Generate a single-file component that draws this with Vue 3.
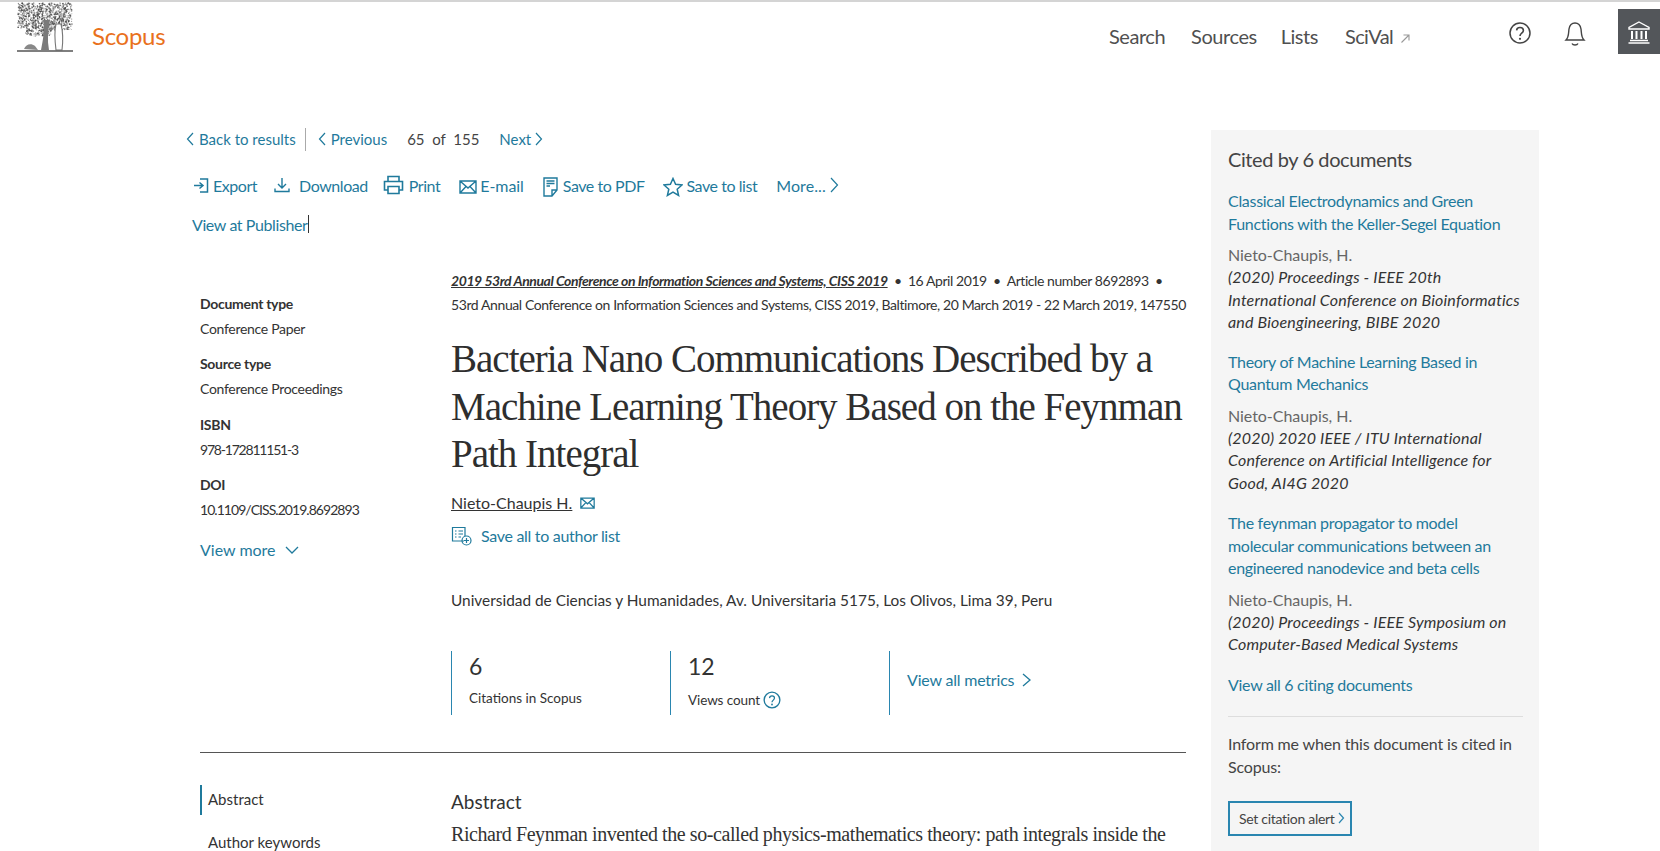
<script setup>
const seeds = []
let s = 7
const rnd = () => { s = (s * 16807) % 2147483647; return s / 2147483647 }
for (let i = 0; i < 1100; i++) {
  const x = 1 + rnd() * 54, y = 1 + rnd() * 33
  const dx = (x - 28) / 28, dy = (y - 13) / 22
  if (dx * dx * 0.55 + dy * dy < 1 && !(x > 34 && y > 28) && !(x < 8 && y > 26)) seeds.push({ x, y, r: 0.35 + rnd() * 0.55, o: 0.35 + rnd() * 0.6 })
}
const meta = [
  ['Document type', 'Conference Paper'],
  ['Source type', 'Conference Proceedings'],
  ['ISBN', '978-172811151-3'],
  ['DOI', '10.1109/CISS.2019.8692893']
]
const cited = [
  { t: ['Classical Electrodynamics and Green', 'Functions with the Keller-Segel Equation'], a: 'Nieto-Chaupis, H.', s: ['(2020) Proceedings - IEEE 20th', 'International Conference on Bioinformatics', 'and Bioengineering, BIBE 2020'] },
  { t: ['Theory of Machine Learning Based in', 'Quantum Mechanics'], a: 'Nieto-Chaupis, H.', s: ['(2020) 2020 IEEE / ITU International', 'Conference on Artificial Intelligence for', 'Good, AI4G 2020'] },
  { t: ['The feynman propagator to model', 'molecular communications between an', 'engineered nanodevice and beta cells'], a: 'Nieto-Chaupis, H.', s: ['(2020) Proceedings - IEEE Symposium on', 'Computer-Based Medical Systems'] }
]
</script>

<template>
  <div class="page">
    <header class="top">
      <svg class="tree" width="56" height="50" viewBox="0 0 56 50">
        <circle v-for="(c, i) in seeds" :key="i" :cx="c.x" :cy="c.y" :r="c.r" fill="#444" :opacity="c.o" />
        <path d="M26 18 C28 28 26 38 24 48 L32 48 C30 38 31 28 33 18 Z" fill="#7a7a7a" />
        <path d="M39 22 C37 30 38 40 39 48 L45 48 C46 40 46 30 44 22 Z" fill="#fff" stroke="#777" stroke-width="1.100" />
        <path d="M7 47 C9 42 14 41 18 44 L21 48 Z" fill="#888" />
        <path d="M0 49 H56" fill="none" stroke="#555" stroke-width="1.500" />
      </svg>
      <span class="brand">Scopus</span>
      <nav class="nav">
        <a class="n1">Search</a><a class="n2">Sources</a><a class="n3">Lists</a><a class="n4">SciVal</a>
        <svg class="ext" width="11" height="11" viewBox="0 0 11 11"><path d="M1.500 9.500 9 2 M3.500 2 H9 V7.500" fill="none" stroke="#999" stroke-width="1.100" /></svg>
      </nav>
      <svg class="help" width="24" height="24" viewBox="0 0 24 24"><circle cx="12" cy="12" r="10" fill="none" stroke="#444" stroke-width="1.500" /><path d="M8.600 9.400 C8.800 5.400 15.400 5.600 15.400 9.600 C15.400 12.200 12 12.300 12 15" fill="none" stroke="#444" stroke-width="1.600" /><circle cx="12" cy="17.800" r="1.100" fill="#444" /></svg>
      <svg class="bell" width="22" height="26" viewBox="0 0 22 26"><path d="M2 19 C5 16 4.500 11 5 8 C5.700 4 8.500 2 11 2 C13.500 2 16.300 4 17 8 C17.500 11 17 16 20 19 Z" fill="none" stroke="#444" stroke-width="1.400" /><path d="M8 22.500 C9 24.500 13 24.500 14 22.500" fill="none" stroke="#444" stroke-width="1.400" /></svg>
      <div class="inst">
        <svg width="24" height="24" viewBox="0 0 24 24"><path d="M12 2 L22 7.500 V9 H2 V7.500 Z" fill="none" stroke="#fff" stroke-width="1.400" /><path d="M5 11 V19 M9.500 11 V19 M14.500 11 V19 M19 11 V19" stroke="#fff" stroke-width="2" /><path d="M3 20.500 H21 M1.500 23 H22.500" stroke="#fff" stroke-width="1.500" /></svg>
      </div>
    </header>

    <div class="body">
      <main class="main">
        <div class="pager">
          <a class="link"><svg class="cv l" width="8" height="14" viewBox="0 0 8 14"><path d="M7 1 L1.500 7 L7 13" /></svg>Back to results</a>
          <span class="divider"></span>
          <a class="link"><svg class="cv l" width="8" height="14" viewBox="0 0 8 14"><path d="M7 1 L1.500 7 L7 13" /></svg>Previous</a>
          <span class="count">65 &nbsp;of &nbsp;155</span>
          <a class="link">Next<svg class="cv r" width="8" height="14" viewBox="0 0 8 14"><path d="M1 1 L6.500 7 L1 13" /></svg></a>
        </div>
        <div class="tools">
          <a class="tool t-export">
            <svg width="15" height="17" viewBox="0 0 15 17"><path d="M0 8.500 H8.500 M5.500 5.500 L9 8.500 L5.500 11.500 M6 2 H13.500 V15 H6" fill="none" stroke="#1f7a9c" stroke-width="1.500" /></svg>
            Export
          </a>
          <a class="tool t-down">
            <svg width="16" height="16" viewBox="0 0 16 16"><path d="M8 1 V10.500 M4 7 L8 11 L12 7 M1 11.500 V14.500 H15 V11.500" fill="none" stroke="#1f7a9c" stroke-width="1.400" /></svg>
            Download
          </a>
          <a class="tool t-print">
            <svg width="21" height="20" viewBox="0 0 21 20"><path d="M5 6 V1.500 H16 V6 M5 15 H1.500 V6.500 H19.500 V15 H16 M5 11.500 H16 V18.500 H5 Z" fill="none" stroke="#1f7a9c" stroke-width="1.600" /></svg>
            Print
          </a>
          <a class="tool t-mail">
            <svg class="drop" width="18" height="14" viewBox="0 0 18 14"><path d="M1 1 H17 V13 H1 Z M1 1 L9 8 L17 1 M1 13 L7 6.500 M17 13 L11 6.500" fill="none" stroke="#1f7a9c" stroke-width="1.400" /></svg>
            E-mail
          </a>
          <a class="tool t-pdf">
            <svg class="drop" width="15" height="20" viewBox="0 0 15 20"><path d="M1 1 H14 V13 L9 19 H1 Z M9 19 V13 H14" fill="none" stroke="#1f7a9c" stroke-width="1.400" /><path d="M3.500 4 H11.500 M3.500 6.500 H11.500 M3.500 9 H7" stroke="#1f7a9c" stroke-width="1.300" /></svg>
            Save to PDF
          </a>
          <a class="tool t-star">
            <svg class="drop" width="20" height="20" viewBox="0 0 20 20"><path d="M10 1.500 L12.600 7.300 L19 8 L14.200 12.200 L15.600 18.500 L10 15.200 L4.400 18.500 L5.800 12.200 L1 8 L7.400 7.300 Z" fill="none" stroke="#1f7a9c" stroke-width="1.500" /></svg>
            Save to list
          </a>
          <a class="tool t-more">More...<svg class="cv r" width="9" height="16" viewBox="0 0 9 16"><path d="M1 1 L7.500 8 L1 15" /></svg></a>
        </div>
        <div class="publisher"><a class="link">View at Publisher</a><span class="caret"></span></div>

        <div class="record">
          <aside class="meta">
            <div v-for="m in meta" :key="m[0]" class="meta-item">
              <div class="meta-k">{{ m[0] }}</div>
              <div class="meta-v">{{ m[1] }}</div>
            </div>
            <a class="more">View more
              <svg width="14" height="8" viewBox="0 0 14 8"><path d="M1 1 L7 7 L13 1" fill="none" stroke="#1f7a9c" stroke-width="1.300" /></svg>
            </a>
          </aside>
          <section class="doc">
            <div class="src1"><u>2019 53rd Annual Conference on Information Sciences and Systems, CISS 2019</u><span class="rest"> &nbsp;•&nbsp; 16 April 2019 &nbsp;•&nbsp; Article number 8692893 &nbsp;•</span></div>
            <div class="src2">53rd Annual Conference on Information Sciences and Systems, CISS 2019, Baltimore, 20 March 2019 - 22 March 2019, 147550</div>
            <h1 class="title">Bacteria Nano Communications Described by a<br />Machine Learning Theory Based on the Feynman<br />Path Integral</h1>
            <div class="author"><u>Nieto-Chaupis H.</u>
              <svg width="15" height="12" viewBox="0 0 18 14"><path d="M1 1 H17 V13 H1 Z M1 1 L9 8 L17 1 M1 13 L7 6.500 M17 13 L11 6.500" fill="none" stroke="#1f7a9c" stroke-width="1.500" /></svg>
            </div>
            <a class="saveall">
              <svg width="21" height="20" viewBox="0 0 21 20"><path d="M13 15 H1.500 V1.500 H14 V10 M4 5 H5.500 M7.500 5 H12 M4 8 H5.500 M7.500 8 H12 M4 11 H5.500 M7.500 11 H10" fill="none" stroke="#1f7a9c" stroke-width="1.200" /><circle cx="15.500" cy="14.500" r="4.500" fill="none" stroke="#1f7a9c" stroke-width="1.200" /><path d="M15.500 12 V17 M13 14.500 H18" stroke="#1f7a9c" stroke-width="1.200" /></svg>
              Save all to author list
            </a>
            <div class="affil">Universidad de Ciencias y Humanidades, Av. Universitaria 5175, Los Olivos, Lima 39, Peru</div>
            <div class="metrics">
              <div class="metric"><div class="num">6</div><div class="lab">Citations in Scopus</div></div>
              <div class="metric"><div class="num">12</div><div class="lab lab2">Views count
                <svg class="q" width="18" height="18" viewBox="0 0 16 16"><circle cx="8" cy="8" r="7" fill="none" stroke="#1f7a9c" stroke-width="1.200" /><path d="M5.800 6.300 C6 3.600 10.200 3.800 10.200 6.300 C10.200 8 8 8.200 8 10" fill="none" stroke="#1f7a9c" stroke-width="1.100" /><circle cx="8" cy="12" r=".8" fill="#1f7a9c" /></svg>
              </div></div>
              <div class="metric last"><a class="allm">View all metrics
                <svg width="9" height="14" viewBox="0 0 9 14"><path d="M1 1 L8 7 L1 13" fill="none" stroke="#1f7a9c" stroke-width="1.300" /></svg>
              </a></div>
            </div>
          </section>
        </div>

        <hr class="rule" />

        <div class="lower">
          <aside class="tabs">
            <div class="tab active">Abstract</div>
            <div class="tab">Author keywords</div>
          </aside>
          <section class="abstract">
            <h2>Abstract</h2>
            <p>Richard Feynman invented the so-called physics-mathematics theory: path integrals inside the</p>
          </section>
        </div>
      </main>

      <aside class="side">
        <h3>Cited by 6 documents</h3>
        <div v-for="(c, i) in cited" :key="i" class="cite">
          <a class="cite-t"><span v-for="l in c.t" :key="l">{{ l }}</span></a>
          <div class="cite-a">{{ c.a }}</div>
          <div class="cite-s"><span v-for="l in c.s" :key="l">{{ l }}</span></div>
        </div>
        <a class="allc">View all 6 citing documents</a>
        <div class="side-rule"></div>
        <p class="inform">Inform me when this document is cited in Scopus:</p>
        <button class="alert">Set citation alert<svg class="cv r" width="7" height="12" viewBox="0 0 7 12"><path d="M1 1 L5.500 6 L1 11" /></svg></button>
      </aside>
    </div>
  </div>
</template>

<style>
html, body { margin: 0; background: #fff; overflow: hidden; }
</style>

<style scoped>
.page { width: 1660px; height: 851px; overflow: hidden; font-family: Lato, "Liberation Sans", sans-serif; color: #333; border-top: 2px solid #d4d4d4; box-sizing: border-box; }
a { color: #1f7a9c; }
.cv { fill: none; stroke: #1f7a9c; stroke-width: 1.200; flex: none; }
.cv.l { margin-right: 5px; }
.cv.r { margin-left: 4px; }
.top { display: flex; align-items: flex-start; height: 125px; }
.tree { margin: 0 0 0 17px; flex: none; }
.brand { margin: 19px 0 0 19px; font-size: 24px; letter-spacing: -0.300px; line-height: 30px; color: #e9711c; }
.nav { display: flex; align-items: center; margin: 20px 0 0 auto; font-size: 20px; letter-spacing: -0.450px; line-height: 28px; }
.nav a { color: #505050; }
.n2 { margin-left: 26px; }
.n3 { margin-left: 24px; }
.n4 { margin-left: 27px; letter-spacing: -0.650px; }
.ext { margin: 5px 0 0 7px; }
.help { margin: 19px 0 0 97px; }
.bell { margin: 19px 0 0 32px; }
.inst { width: 42px; height: 45px; margin: 7px 0 0 32px; background: #53565a; display: flex; align-items: center; justify-content: center; }
.body { display: flex; align-items: flex-start; }
.main { width: 1000px; margin-left: 186px; flex: none; }
.link { display: inline-flex; align-items: center; }
.pager { display: flex; align-items: center; height: 24px; font-size: 15px; line-height: 24px; }
.divider { width: 1px; height: 23px; background: #aaa; margin: 0 12px 0 9px; }
.count { margin: 0 20px 0 20px; color: #444; }
.tools { display: flex; align-items: center; margin: 21px 0 0 8px; height: 26px; font-size: 16px; letter-spacing: -0.450px; }
.tool { display: flex; align-items: center; gap: 4px; }
.drop { margin-top: 3px; }
.t-down { margin-left: 17px; gap: 9px; }
.t-print { margin-left: 15px; gap: 5px; }
.t-mail { margin-left: 19px; gap: 3px; letter-spacing: -0.050px; }
.t-pdf { margin-left: 19px; gap: 5px; }
.t-star { margin-left: 18px; gap: 4px; }
.t-more { margin-left: 19px; gap: 0; letter-spacing: 0.100px; }
.publisher { display: flex; align-items: center; margin: 14px 0 0 6px; height: 24px; font-size: 16px; letter-spacing: -0.400px; }
.caret { width: 1px; height: 18px; background: #333; margin-left: 1px; }
.record { display: flex; margin-top: 33px; padding-left: 14px; }
.meta { width: 251px; flex: none; padding-top: 23px; font-size: 14px; }
.meta-item { margin-bottom: 11.400px; }
.meta-k { line-height: 24px; font-weight: 700; color: #333; font-size: 14px; letter-spacing: -0.300px; }
.meta-v { line-height: 25px; color: #333; letter-spacing: -0.300px; }
.meta-item:nth-child(3) .meta-v { letter-spacing: -1.200px; }
.meta-item:nth-child(4) .meta-v { letter-spacing: -0.950px; }
.more { display: flex; align-items: center; gap: 9px; margin-top: 16px; font-size: 16px; line-height: 24px; }
.doc { width: 735px; }
.src1 { font-size: 14px; line-height: 24px; white-space: nowrap; letter-spacing: -0.430px; }
.src1 u { font-weight: 700; font-style: italic; }
.src2 { font-size: 14px; line-height: 24px; white-space: nowrap; letter-spacing: -0.400px; }
.title { margin: 18px 0 0; font-family: "Liberation Serif", serif; font-weight: 400; font-size: 39px; letter-spacing: -1px; line-height: 47.500px; color: #2e2e2e; white-space: nowrap; }
.author { margin-top: 13px; font-size: 16px; line-height: 24px; display: flex; align-items: center; gap: 8px; }
.saveall { display: flex; align-items: center; gap: 9px; margin-top: 9px; font-size: 16px; line-height: 24px; letter-spacing: -0.300px; }
.affil { margin-top: 40px; font-size: 15.400px; line-height: 24px; }
.metrics { display: flex; margin-top: 39px; height: 64px; }
.metric { width: 219px; border-left: 1.500px solid #2a86b0; padding-left: 17px; box-sizing: border-box; }
.metric.last { display: flex; align-items: center; }
.num { font-size: 23px; line-height: 30px; }
.lab { font-size: 13.500px; line-height: 22px; margin-top: 6px; display: flex; align-items: center; gap: 5px; }
.lab2 { margin-top: 8px; gap: 3px; letter-spacing: -0.100px; }
.allm { display: flex; align-items: center; gap: 8px; font-size: 16px; letter-spacing: -0.200px; margin-top: -6px; }
.rule { width: 986px; margin: 37px 0 0 14px; border: 0; border-top: 1.500px solid #555; }
.lower { display: flex; margin-top: 32px; padding-left: 14px; }
.tabs { width: 251px; flex: none; font-size: 15px; }
.tab { padding-left: 8px; height: 30px; line-height: 28px; margin-bottom: 13px; }
.tab.active { border-left: 2px solid #1f7a9c; padding-left: 6px; }
.abstract h2 { margin: 3px 0 0; font-size: 19px; line-height: 28px; font-weight: 400; }
.abstract p { margin: 5px 0 0; font-family: "Liberation Serif", serif; font-size: 20px; letter-spacing: -0.420px; line-height: 26px; white-space: nowrap; }
.side { margin-left: 25px; width: 328px; height: 725px; background: #f5f5f5; box-sizing: border-box; padding: 14px 16px 14px 17px; flex: none; font-size: 16px; margin-top: 3px; }
.side h3 { margin: 0; font-size: 20px; line-height: 30px; font-weight: 400; letter-spacing: -0.400px; color: #444; }
.cite { margin-top: 16px; }
.cite + .cite { margin-top: 17px; }
.cite + .cite + .cite { margin-top: 18px; }
.cite span { display: block; white-space: nowrap; }
.cite-t { display: block; line-height: 22.500px; letter-spacing: -0.300px; }
.cite-a { margin-top: 9px; line-height: 22px; color: #666; letter-spacing: -0.050px; }
.cite-s { font-style: italic; line-height: 22.500px; color: #333; letter-spacing: 0.170px; }
.allc { display: block; margin-top: 17px; line-height: 24px; letter-spacing: -0.300px; }
.side-rule { height: 1px; background: #ddd; margin-top: 19px; }
.inform { margin: 15px 0 0; line-height: 23px; width: 290px; color: #444; letter-spacing: -0.150px; }
.alert { display: flex; align-items: center; margin-top: 23px; width: 124px; height: 35px; padding: 0 0 0 9px; background: transparent; border: 2px solid #2a86b0; font: 14px Lato, sans-serif; letter-spacing: -0.300px; color: #444; box-sizing: border-box; white-space: nowrap; }
.alert .cv { stroke: #2a86b0; margin-left: 3px; }
</style>
